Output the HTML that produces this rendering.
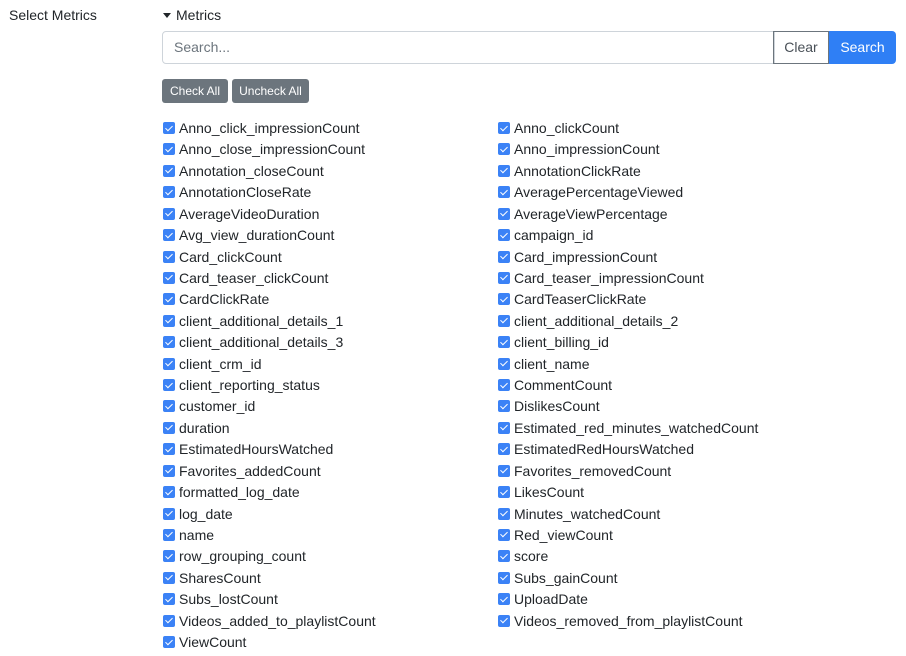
<!DOCTYPE html>
<html><head><style>
body{margin:0;width:906px;height:656px;background:#fff;font-family:"Liberation Sans",sans-serif;color:#212529;position:relative;overflow:hidden}
.a{position:absolute}
.lbl{left:9px;top:7px;font-size:14px}
.met{left:163px;top:7px;font-size:14px}
.tri{display:inline-block;width:0;height:0;border-left:4px solid transparent;border-right:4px solid transparent;border-top:5px solid #212529;vertical-align:2px;margin-right:5px}
.inp{left:162px;top:31px;width:610px;height:31px;border:1px solid #ced4da;border-radius:4px 0 0 4px;font-size:14px;color:#6c757d;line-height:31px;padding-left:11px;box-sizing:content-box;width:600px}
.clr{left:773px;top:31px;width:55px;height:31px;border:1px solid #6c757d;font-size:14px;line-height:31px;text-align:center;color:#495057;box-sizing:content-box;width:54px}
.srch{left:829px;top:31px;width:67px;height:33px;background:#3b82f6;color:#fff;font-size:14px;line-height:32px;text-align:center;border-radius:0 4px 4px 0;background:#2f7ff5}
.btn{top:79px;height:24px;background:#6c757d;color:#fff;font-size:12px;line-height:24px;text-align:center;border-radius:3px}
.it{font-size:14px;height:21px;line-height:16px;white-space:nowrap}
.cb{display:inline-block;width:12px;height:12px;background:#3b82f6;border-radius:2px;vertical-align:-1px;margin-right:4px;position:relative}
.cb:after{content:"";position:absolute;left:3.5px;top:1.5px;width:3px;height:6px;border:solid #fff;border-width:0 1.6px 1.6px 0;transform:rotate(45deg)}
</style></head><body>
<div class="a lbl">Select Metrics</div>
<div class="a met"><span class="tri"></span>Metrics</div>
<div class="a inp">Search...</div>
<div class="a clr">Clear</div>
<div class="a srch">Search</div>
<div class="a btn" style="left:162px;width:66px">Check All</div>
<div class="a btn" style="left:232px;width:77px">Uncheck All</div>
<div class="a" style="left:163px;top:120px" id="c1"></div>
<div class="a" style="left:498px;top:120px" id="c2"></div>
<script>
var L=["Anno_click_impressionCount","Anno_close_impressionCount","Annotation_closeCount","AnnotationCloseRate","AverageVideoDuration","Avg_view_durationCount","Card_clickCount","Card_teaser_clickCount","CardClickRate","client_additional_details_1","client_additional_details_3","client_crm_id","client_reporting_status","customer_id","duration","EstimatedHoursWatched","Favorites_addedCount","formatted_log_date","log_date","name","row_grouping_count","SharesCount","Subs_lostCount","Videos_added_to_playlistCount","ViewCount"];
var R=["Anno_clickCount","Anno_impressionCount","AnnotationClickRate","AveragePercentageViewed","AverageViewPercentage","campaign_id","Card_impressionCount","Card_teaser_impressionCount","CardTeaserClickRate","client_additional_details_2","client_billing_id","client_name","CommentCount","DislikesCount","Estimated_red_minutes_watchedCount","EstimatedRedHoursWatched","Favorites_removedCount","LikesCount","Minutes_watchedCount","Red_viewCount","score","Subs_gainCount","UploadDate","Videos_removed_from_playlistCount"];
function f(id,a){var h="";a.forEach(function(t,i){h+='<div class="it" style="position:absolute;top:'+(i*21.42).toFixed(2)+'px"><span class="cb"></span>'+t+'</div>'});document.getElementById(id).innerHTML=h}
f("c1",L);f("c2",R);
</script>
</body></html>
